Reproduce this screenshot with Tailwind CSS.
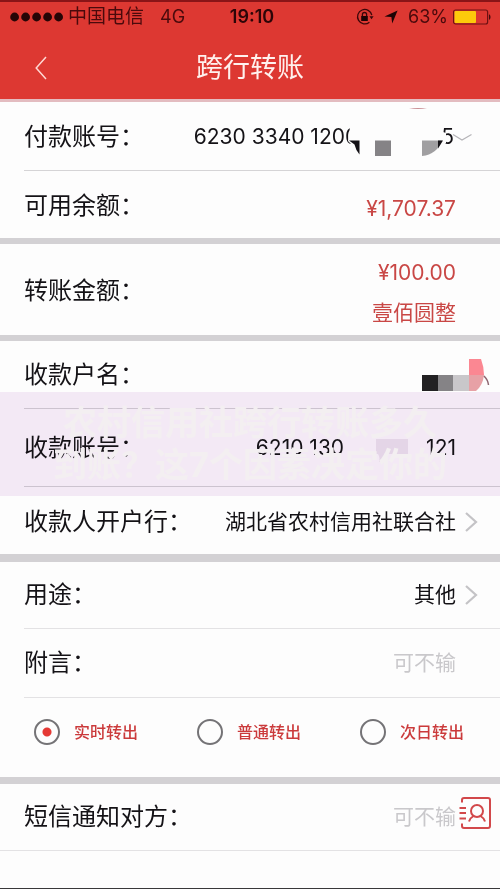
<!DOCTYPE html>
<html lang="zh-CN">
<head>
<meta charset="utf-8">
<meta name="viewport" content="width=device-width, initial-scale=1">
<title>跨行转账</title>
<script src="https://cdn.jsdelivr.net/npm/@tailwindcss/browser@4"></script>
</head>
<body class="min-h-screen bg-[#fdfdfd] font-['Inter','Noto_Sans_CJK_SC',sans-serif] text-[21px] leading-7 text-[#141216]">
<div class="flex min-h-screen flex-col border-b border-[#39383a]">
  <header class="border-t-2 border-b-3 border-t-[#8a1417] border-b-[#e3bcc0] bg-[#dd3832]">
    <div class="grid h-[30px] grid-cols-[1fr_auto_1fr] items-center pl-[10px] pr-[9px] text-[18px] text-[#4a0a0c]">
      <div class="flex items-center">
        <svg class="h-[10px] w-[54px]" viewBox="0 0 54 10" fill="#260506" aria-hidden="true"><circle cx="4.6" cy="5" r="4.4"/><circle cx="15.6" cy="5" r="4.4"/><circle cx="26.6" cy="5" r="4.4"/><circle cx="37.6" cy="5" r="4.4"/><circle cx="48.6" cy="5" r="4.4"/></svg>
        <span class="ml-1 text-[19px]">中国电信</span>
        <span class="ml-4">4G</span>
      </div>
      <time class="pl-[3px] font-semibold text-[#2c0507]">19:10</time>
      <div class="flex items-center justify-end">
        <svg class="h-[18px] w-[18px]" viewBox="0 0 18 18" fill="none" stroke="#3a0709" stroke-width="1.3" aria-hidden="true"><path d="M15.8 7.2A7.2 7.2 0 1 0 13.4 14.2"/><path d="M13.4 8.2h4.2l-2.1 3z" fill="#3a0709" stroke="none"/><rect x="5.2" y="8" width="6.6" height="5" fill="#1d0304" stroke="none"/><path d="M6.4 8.2V6.6a2.1 2.1 0 0 1 4.2 0v1.6"/></svg>
        <svg class="ml-[10px] h-[14px] w-[14px]" viewBox="0 0 14 14" fill="#1d0304" aria-hidden="true"><path d="M13.6.5 8.2 13.6 7.4 7.1.5 6.4z"/></svg>
        <span class="ml-[10px]">63%</span>
        <svg class="ml-[5px] h-4 w-[38px]" viewBox="0 0 38 16" aria-hidden="true"><rect x=".6" y="1" width="34" height="14" rx="2" fill="none" stroke="#6d1113" stroke-width="1.2"/><rect x="1.5" y="2" width="21.5" height="12" rx="1" fill="#fdca0b"/><path d="M36 5.2c2 .8 2 4.800 0 5.600z" fill="#4a0a0c"/></svg>
      </div>
    </div>
    <div class="grid h-[67px] grid-cols-[1fr_auto_1fr] items-center pt-1">
      <button type="button" aria-label="返回" class="ml-[30px] w-6"><svg class="h-6 w-6" viewBox="0 0 24 24" fill="none" stroke="#ffd9d4" stroke-width="1.500"><path d="M16 1 6.200 12 16 23"/></svg></button>
      <h1 class="text-[27px] leading-9 text-[#fff1ee]">跨行转账</h1>
    </div>
  </header>

  <main>
    <section class="border-b-6 border-[#d3d1d4]">
      <div class="relative ml-6 flex h-[69px] items-center justify-between border-b border-[#d5d4d6] pt-[2px] pr-[46px]">
        <span class="text-[24px]">付款账号：</span>
        <span class="flex"><span>6230 3340 1200</span><span class="ml-[83px]">5</span></span>
        <button type="button" aria-label="选择付款账号" class="absolute right-[27px]"><svg class="h-[9px] w-6" viewBox="0 0 24 9" fill="none" stroke="#b5b4b8" stroke-width="1.200"><path d="M4 1.500 13 7 22.500 1.500"/></svg></button>
        <svg class="absolute right-[50px] top-[4px] h-[52px] w-[104px]" viewBox="346 106 104 52" aria-hidden="true"><path d="M350 127h93v5l3 1v10l-5 5h-86l-7-7z" fill="#fdfdfd"/><path d="M409 109q9-2 18 0z" fill="#c98f95"/><path d="M349 140.500h10.500v14q-4-5-5-10z" fill="#141216"/><path d="M375 140.500h16V156h-16z" fill="#858386"/><path d="M422 140.500h20q-5 14-20 15.500z" fill="#a09fa1"/><path d="M438 140.500h5l-5 8z" fill="#141216"/></svg>
      </div>
      <div class="ml-6 flex h-[67px] items-center justify-between pt-[2px] pr-[44px]">
        <span class="text-[24px]">可用余额：</span>
        <span class="pt-[6px] text-[#c94745]">¥1,707.37</span>
      </div>
    </section>

    <section class="border-b-6 border-[#d3d1d4]">
      <div class="ml-6 flex h-[91px] items-center justify-between pt-[2px] pr-[44px]">
        <span class="text-[24px]">转账金额：</span>
        <span class="flex flex-col items-end gap-3 pt-1 text-[#c94745]"><span>¥100.00</span><span>壹佰圆整</span></span>
      </div>
    </section>

    <section class="relative border-b-8 border-[#d3d1d4]">
      <div class="ml-6 flex h-[68px] items-center justify-between border-b border-[#d5d4d6] pr-[10px]">
        <span class="text-[24px]">收款户名：</span>
        <svg class="h-8 w-[68px]" viewBox="422 359 68 32" aria-hidden="true"><path d="M422 375h16v16h-16z" fill="#222123"/><path d="M438 375h15v16h-15z" fill="#858386"/><path d="M453 375h16v16h-16z" fill="#c9c7ca"/><path d="M469 359h12q3 8 3 16h-15z" fill="#fb8792"/><path d="M469 375h15q-1 10-8 16h-7z" fill="#e7a1a6"/><path d="M484 376q4 4 4.500 9" fill="none" stroke="#8d6570" stroke-width="1.500"/></svg>
      </div>
      <div class="ml-6 flex h-[78px] items-center justify-between border-b border-[#d5d4d6] pr-[44px]">
        <span class="text-[24px]">收款账号：</span>
        <span class="flex"><span>6210 130</span><svg class="ml-[32px] h-7 w-8" viewBox="0 0 32 28" aria-hidden="true"><path d="M0 5h32v15H10q0 8-8 11 3-7 0-11H0z" fill="#eee7ef"/></svg><span class="ml-[18px]">121</span></span>
      </div>
      <div class="ml-6 flex h-[67px] items-center justify-between pt-[2px]">
        <span class="text-[24px]">收款人开户行：</span>
        <button type="button" class="flex items-center whitespace-nowrap pr-[22px]">湖北省农村信用社联合社<svg class="ml-2 h-[22px] w-[14px]" viewBox="0 0 14 22" fill="none" stroke="#c4c3c6" stroke-width="2.200" aria-hidden="true"><path d="M2 2l10 9L2 20"/></svg></button>
      </div>
      <!-- Translucent caption banner floating over the payee rows -->
      <div class="pointer-events-none absolute inset-x-0 top-[51px] h-[104px] bg-[#f5ebf7] mix-blend-multiply"></div>
      <p class="pointer-events-none absolute inset-x-0 top-[51px] flex h-[104px] flex-col items-center justify-center whitespace-nowrap text-[34px] leading-[42px] font-bold text-[#f3eff1]"><span>农村信用社跨行转账多久</span><span>到账？这7个因素决定你的</span></p>
    </section>

    <section class="border-b-7 border-[#d3d1d4]">
      <div class="ml-6 flex h-[67px] items-center justify-between border-b border-[#e3e2e4]">
        <span class="text-[24px]">用途：</span>
        <button type="button" class="flex items-center pr-[22px]">其他<svg class="ml-2 h-[22px] w-[14px]" viewBox="0 0 14 22" fill="none" stroke="#c4c3c6" stroke-width="2.200" aria-hidden="true"><path d="M2 2l10 9L2 20"/></svg></button>
      </div>
      <div class="ml-6 flex h-[69px] items-center justify-between border-b border-[#e3e2e4] pr-[44px]">
        <label for="memo" class="text-[24px]">附言：</label>
        <input id="memo" type="text" placeholder="可不输" class="w-40 text-right outline-none placeholder:text-[#c9c8cb]">
      </div>
      <fieldset aria-label="转出方式" class="flex h-[79px] items-center justify-between pr-9 pb-[12px] pl-[34px] text-[16px] font-medium text-[#cb3a3b]">
        <label class="flex items-center gap-[14px]"><input type="radio" name="speed" checked class="size-[26px] appearance-none rounded-full border-2 border-[#747376] checked:bg-[radial-gradient(circle,#e53935_4px,transparent_5px)]">实时转出</label>
        <label class="flex items-center gap-[14px]"><input type="radio" name="speed" class="size-[26px] appearance-none rounded-full border-2 border-[#747376] checked:bg-[radial-gradient(circle,#e53935_4px,transparent_5px)]">普通转出</label>
        <label class="flex items-center gap-[14px]"><input type="radio" name="speed" class="size-[26px] appearance-none rounded-full border-2 border-[#747376] checked:bg-[radial-gradient(circle,#e53935_4px,transparent_5px)]">次日转出</label>
      </fieldset>
    </section>

    <section class="flex h-[67px] items-center justify-between border-b border-[#e3e2e4] pr-[9px] pl-6">
      <label for="sms" class="text-[24px]">短信通知对方：</label>
      <div class="flex items-center gap-[3px]">
        <input id="sms" type="text" placeholder="可不输" class="w-40 text-right outline-none placeholder:text-[#c9c8cb]">
        <button type="button" aria-label="通讯录" class="-mt-2"><svg class="h-8 w-8" viewBox="0 0 32 32" fill="none" stroke="#d2484a" stroke-width="2"><path d="M3 5.500V3a2 2 0 0 1 2-2h24a2 2 0 0 1 2 2v26a2 2 0 0 1-2 2H5a2 2 0 0 1-2-2v-2.500M.5 11H7M.5 16H7M.5 21.500H7"/><circle cx="18" cy="14" r="6"/><path d="M14.500 19q-3.500 2-4.500 5.500M21.500 19q3.500 2 4.500 5.500"/></svg></button>
      </div>
    </section>
  </main>
</div>
</body>
</html>
